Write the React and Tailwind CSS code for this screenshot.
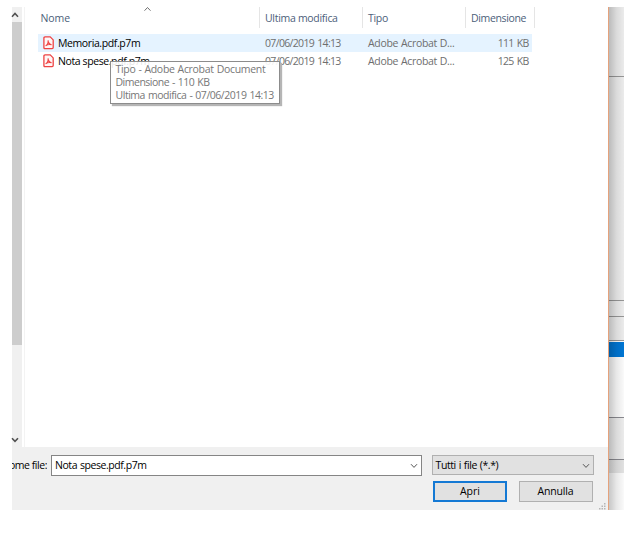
import React, { useState } from 'react';

const files = [
  { name: 'Memoria.pdf.p7m', modified: '07/06/2019 14:13', type: 'Adobe Acrobat D...', size: '111 KB' },
  { name: 'Nota spese.pdf.p7m', modified: '07/06/2019 14:13', type: 'Adobe Acrobat D...', size: '125 KB' },
];

function Chevron({ up, className }) {
  return (
    <svg viewBox="0 0 8 6" className={className} fill="none" stroke="currentColor">
      <path d={up ? 'M1 4.7 L4 1.5 L7 4.7' : 'M1 1.2 L4 4.4 L7 1.2'} />
    </svg>
  );
}

function PdfIcon() {
  return (
    <svg viewBox="0 0 11 14" className="mb-[2px] h-[14px] w-[11px] shrink-0" fill="none" stroke="#ee4444">
      <path d="M2 .9 H7.2 L10.2 3.9 V11.6 Q10.2 12.7 9.1 12.7 H2 Q.9 12.7 .9 11.6 V2 Q.9 .9 2 .9 Z" fill="#fff6f6" strokeWidth="1.3" />
      <path d="M5 4.4 C5.2 6.5 6.4 8.2 8.6 8.8 C6.3 8.2 4.2 8.7 2.6 9.9 C4.3 8.9 5.5 6.8 5 4.4 Z" strokeWidth="1.1" />
    </svg>
  );
}

function ScrollBar() {
  return (
    <div className="flex w-[10px] shrink-0 flex-col bg-[#f0f0f0]">
      <div className="h-[15px] pt-[5px]">
        <Chevron up className="-ml-px h-[6px] w-[8px] stroke-[1.6] text-[#505050]" />
      </div>
      <div className="h-[323px] w-[9.5px] bg-[#cdcdcd]" />
      <div className="mt-auto h-[10px]">
        <Chevron className="-ml-px h-[6px] w-[8px] stroke-[1.6] text-[#505050]" />
      </div>
    </div>
  );
}

function FileTable({ onSelect }) {
  return (
    <div className="relative ml-[2px] min-w-0 flex-1 border-l border-[#f3f3f3] bg-white">
      <div className="flex h-[21px] items-center tracking-[-0.3px] text-[#4c607a]">
        <div className="h-full w-[235px] border-r border-[#e5e5e5] pl-[15.5px] leading-[22px]">
          <div className="flex justify-between">
            <span className="tracking-[-0.1px]">Nome</span>
            <Chevron up className="mr-[107px] -mt-px h-[6px] w-[9px] stroke-[.9] text-[#606060]" />
          </div>
        </div>
        <div className="h-full w-[103px] border-r border-[#e5e5e5] pl-[5px] leading-[22px]">Ultima modifica</div>
        <div className="h-full w-[103px] border-r border-[#e5e5e5] pl-[5px] leading-[22px]">Tipo</div>
        <div className="h-full w-[69px] border-r border-[#e5e5e5] pl-[5px] leading-[22px] tracking-[-0.35px]">Dimensione</div>
      </div>
      <div className="mt-[6px] ml-[13px] w-[494px] text-[#6e6e6e]">
        {files.map((file, i) => (
          <div
            key={file.name}
            onClick={() => onSelect(file.name)}
            className={`flex h-[18px] items-center pt-[1px] whitespace-nowrap ${i === 0 ? 'bg-[#e5f3ff]' : ''}`}
          >
            <div className="flex w-[227px] items-center gap-[4px] pl-[5px] tracking-[-0.4px] text-black">
              <PdfIcon />
              <span>{file.name}</span>
            </div>
            <div className="w-[103px] tracking-[-0.66px] [word-spacing:1px]">{file.modified}</div>
            <div className="w-[100px] tracking-[-0.33px] [word-spacing:0.5px]">{file.type}</div>
            <div className="flex-1 pr-[3.5px] text-right tracking-[-0.7px] [word-spacing:1px]">{file.size}</div>
          </div>
        ))}
      </div>
      {/* file info tooltip */}
      <div className="absolute top-[54px] left-[85px] h-[43px] w-[169.5px] border border-[#8c8c8c] bg-white/90 pl-[4.5px] text-[#777] leading-[13px] whitespace-nowrap shadow-[2px_2px_1px_#b5b5b5]">
        <div className="pt-[1px] tracking-[-0.3px] [word-spacing:0.5px]">Tipo - Adobe Acrobat Document</div>
        <div className="tracking-[-0.5px] [word-spacing:0.7px]">Dimensione - 110 KB</div>
        <div className="tracking-[-0.46px] [word-spacing:0.7px]">Ultima modifica - 07/06/2019 14:13</div>
      </div>
    </div>
  );
}

function Footer({ fileName }) {
  return (
    <div className="relative h-[63px] overflow-hidden bg-[#f0f0f0] pt-[8px] text-black">
      <div className="flex">
        <div className="flex w-[35px] shrink-0 justify-end overflow-hidden leading-[20px] tracking-[-0.45px] whitespace-nowrap">Nome file:</div>
        <div className="ml-[4px] flex h-[21px] w-[370.5px] items-center justify-between border border-[#858585] bg-white pt-[1px] pr-[3px] pl-[3px]">
          <span className="tracking-[-0.43px] [word-spacing:0.5px]">{fileName}</span>
          <Chevron className="h-[6px] w-[8px] text-[#555]" />
        </div>
        <div className="ml-[10.5px] flex h-[20px] w-[162px] items-center justify-between border border-[#b0b0b0] bg-[#e1e1e1] pt-[1px] pr-[3px] pl-[2.5px]">
          <span className="tracking-[-0.4px] [word-spacing:0.5px]">Tutti i file (*.*)</span>
          <Chevron className="h-[6px] w-[8px] text-[#555]" />
        </div>
      </div>
      <div className="mt-[5px] flex justify-end gap-[12px] pr-[15px]">
        <button className="h-[20.5px] w-[74px] border-2 border-[#1479d4] bg-[#e1e1e1] leading-[16px] tracking-normal">Apri</button>
        <button className="h-[20.5px] w-[74px] border border-[#b0b0b0] bg-[#e1e1e1] pr-[1px] leading-[18px]">Annulla</button>
      </div>
      <svg viewBox="0 0 8 7" className="absolute right-[2px] bottom-0 h-[7px] w-[8px]" fill="#b5b5b5">
        <path d="M6 0h1.5v1.5H6zM3.5 2.5H5V4H3.5zM6 2.5h1.5V4H6zM1 5h1.5v1.5H1zM3.5 5H5v1.5H3.5zM6 5h1.5v1.5H6z" />
      </svg>
    </div>
  );
}

// Strip of the window that stays visible behind the dialog
function BackWindow() {
  return (
    <div className="relative flex flex-1 flex-col bg-[#f0f0f0]">
      <div className="h-[70px] border-b border-[#999]" />
      <div className="h-[224px] border-b border-[#999]" />
      <div className="h-[16px] border-b border-[#999]" />
      <div className="h-[24px] border-b border-[#999]" />
      <div className="h-px bg-white" />
      <div className="h-[15px] bg-[#0078d7]" />
      <div className="h-[61px] border-b border-[#8c8c92] bg-white" />
      <div className="h-[42px] border-b border-[#8c8c92]" />
      <div className="h-[13px] bg-[#e6e6e6]" />
      <div className="flex-1 bg-white" />
      <div className="absolute inset-0 bg-linear-to-r from-black/22 via-black/9 to-black/2" />
    </div>
  );
}

export default function App() {
  const [selected, setSelected] = useState('Nota spese.pdf.p7m');

  return (
    <div className="h-[533px] w-[624px] overflow-hidden bg-white pt-[7px] pl-[12px] font-['Open_Sans','Noto_Sans',sans-serif] text-[10.5px] tracking-[-0.15px]">
      <div className="flex h-[503px]">
        <div className="flex w-[596px] shrink-0 flex-col">
          <div className="flex h-[440px]">
            <ScrollBar />
            <FileTable onSelect={setSelected} />
          </div>
          <Footer fileName={selected} />
        </div>
        <div className="w-px shrink-0 bg-[#e5a27c]" />
        <BackWindow />
      </div>
    </div>
  );
}
